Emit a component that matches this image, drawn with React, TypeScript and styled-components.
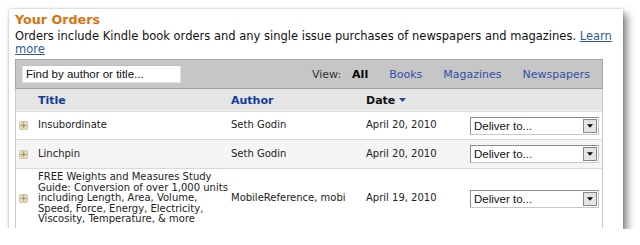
import React from "react";
import styled, { createGlobalStyle } from "styled-components";

const Global = createGlobalStyle`
  html, body { margin: 0; padding: 0; background: #ffffff; }
  body { font-family: "DejaVu Sans", Verdana, sans-serif; }
`;

const Page = styled.div`
  padding: 9px 0 0 9px;
`;

const Card = styled.div`
  width: 614px;
  height: 220px;
  box-sizing: border-box;
  background: #fff;
  padding: 3px 8px 0 6px;
  box-shadow: 0 0 2px rgba(0, 0, 0, 0.25), 4px 5px 8px rgba(0, 0, 0, 0.5);
  overflow: hidden;
`;

const Heading = styled.h1`
  margin: 0;
  font: bold 12.7px/16px "DejaVu Sans", Verdana, sans-serif;
  color: #d8730e;
`;

const Intro = styled.p`
  margin: 2px 0 0;
  font-size: 11.5px;
  line-height: 13px;
  color: #111;
  white-space: nowrap;
`;

const TextLink = styled.a`
  color: #2d5ca8;
  text-decoration: underline;
`;

const Table = styled.div`
  margin-top: 3px;
  width: 588px;
  border-left: 1px solid #c8c8c8;
  border-right: 1px solid #c8c8c8;
  box-sizing: border-box;
`;

const Toolbar = styled.div`
  height: 30px;
  box-sizing: border-box;
  background: #c6c6c6;
  border: 1px solid #a2a2a2;
  margin: 0 -1px;
  display: flex;
  align-items: center;
  padding: 0 12px 0 6px;
`;

const Search = styled.input`
  width: 159px;
  height: 18px;
  box-sizing: border-box;
  border: 1px solid #e0e0e0;
  border-top-color: #bdbdbd;
  background: #fff;
  padding: 0 3px;
  font: 11.5px "Liberation Sans", Arial, sans-serif;
  color: #111;
  outline: none;
  &::placeholder { color: #111; opacity: 1; }
`;

const ViewGroup = styled.nav`
  margin-left: auto;
  display: flex;
  align-items: center;
  font-size: 11px;
  gap: 21px;
`;

const ViewLabel = styled.span`
  color: #333;
  margin-right: -10px;
`;

const ViewItem = styled.a<{ $active?: boolean }>`
  color: ${(p) => (p.$active ? "#000" : "#2f4ea8")};
  font-weight: ${(p) => (p.$active ? "bold" : "normal")};
  text-decoration: none;
`;

const COLS = "22px 193px 135px 104px 1fr";

const HeaderRow = styled.div`
  display: grid;
  grid-template-columns: ${COLS};
  height: 22px;
  align-items: center;
  background: #e5e5e5;
  border-bottom: 1px solid #f4f4f4;
  box-sizing: border-box;
  font-size: 11px;
  font-weight: bold;
`;

const HeadCell = styled.span<{ $sorted?: boolean }>`
  color: ${(p) => (p.$sorted ? "#111" : "#133a9c")};
  display: flex;
  align-items: center;
  gap: 4px;
  padding-top: 1px;
`;

const Row = styled.div<{ $alt?: boolean; $h: number }>`
  display: grid;
  grid-template-columns: ${COLS};
  height: ${(p) => p.$h}px;
  align-items: center;
  background: ${(p) => (p.$alt ? "#f5f5f5" : "#fff")};
  border-top: 1px solid #d9d9d9;
  box-sizing: border-box;
  font-size: 10px;
  line-height: 10.4px;
  color: #222;
`;

const Cell = styled.span`
  white-space: nowrap;
`;

const Expander = styled.span`
  width: 9px;
  height: 9px;
  margin-left: 3px;
  border-radius: 2px;
  background: #e6dcc0;
  border: 1px solid #cfc3a0;
  box-sizing: border-box;
  display: flex;
  align-items: center;
  justify-content: center;
  color: #a08f66;
  font-size: 9px;
  line-height: 7px;
  font-weight: bold;
`;

const Select = styled.div`
  width: 129px;
  height: 18px;
  box-sizing: border-box;
  border: 1px solid #8c8c8c;
  border-right-color: #c8c8c8;
  border-bottom-color: #c8c8c8;
  background: #fff;
  display: flex;
  align-items: center;
  font: 11.5px "Liberation Sans", Arial, sans-serif;
  color: #111;
  padding-left: 3px;
`;

const SelectText = styled.span`
  flex: 1;
`;

const SelectButton = styled.span`
  width: 14px;
  height: 14px;
  margin-right: 1px;
  box-sizing: border-box;
  border: 1px solid #888;
  background: #e4e4e4;
  display: flex;
  align-items: center;
  justify-content: center;
`;

const Caret = ({ color, w = 7 }: { color: string; w?: number }) => (
  <svg width={w} height={4} viewBox="0 0 7 4">
    <path d="M0 0H7L3.5 4Z" fill={color} />
  </svg>
);

const DeliverSelect = () => (
  <Select>
    <SelectText>Deliver to...</SelectText>
    <SelectButton>
      <Caret color="#000" w={6} />
    </SelectButton>
  </Select>
);

const orders = [
  { title: ["Insubordinate"], author: "Seth Godin", date: "April 20, 2010", h: 28 },
  { title: ["Linchpin"], author: "Seth Godin", date: "April 20, 2010", h: 29 },
  {
    title: [
      "FREE Weights and Measures Study",
      "Guide: Conversion of over 1,000 units",
      "including Length, Area, Volume,",
      "Speed, Force, Energy, Electricity,",
      "Viscosity, Temperature, & more",
    ],
    author: "MobileReference, mobi",
    date: "April 19, 2010",
    h: 60,
  },
];

export default function App() {
  return (
    <>
      <Global />
      <Page>
        <Card>
          <Heading>Your Orders</Heading>
          <Intro>
            Orders include Kindle book orders and any single issue purchases of newspapers and magazines.{" "}
            <TextLink href="#">
              Learn
              <br />
              more
            </TextLink>
          </Intro>
          <Table>
            <Toolbar>
              <Search placeholder="Find by author or title..." />
              <ViewGroup>
                <ViewLabel>View:</ViewLabel>
                <ViewItem $active>All</ViewItem>
                <ViewItem href="#">Books</ViewItem>
                <ViewItem href="#">Magazines</ViewItem>
                <ViewItem href="#">Newspapers</ViewItem>
              </ViewGroup>
            </Toolbar>
            <HeaderRow>
              <span />
              <HeadCell>Title</HeadCell>
              <HeadCell>Author</HeadCell>
              <HeadCell $sorted>
                Date <Caret color="#2545a8" />
              </HeadCell>
              <span />
            </HeaderRow>
            {orders.map((o, i) => (
              <Row key={i} $alt={i === 1} $h={o.h}>
                <Expander>+</Expander>
                <Cell>
                  {o.title.map((l, j) => (
                    <React.Fragment key={j}>
                      {j > 0 && <br />}
                      {l}
                    </React.Fragment>
                  ))}
                </Cell>
                <Cell>{o.author}</Cell>
                <Cell>{o.date}</Cell>
                <DeliverSelect />
              </Row>
            ))}
          </Table>
        </Card>
      </Page>
    </>
  );
}
